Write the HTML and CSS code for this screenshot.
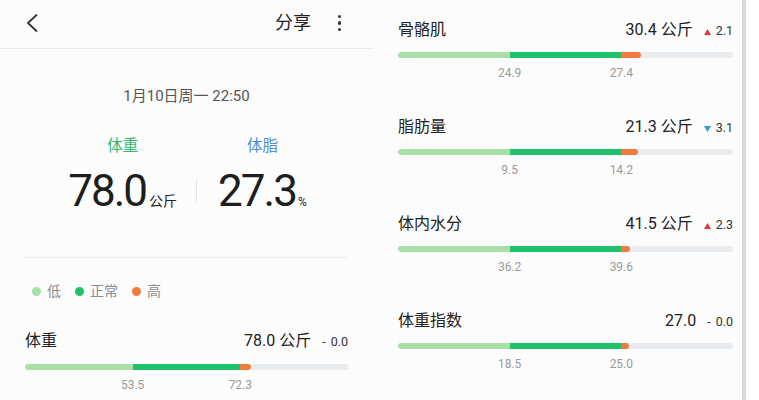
FILE: index.html
```html
<!DOCTYPE html>
<html lang="zh">
<head>
<meta charset="utf-8">
<link rel="stylesheet" href="styles.css">
</head>
<body>
<div class="page">
  <section class="left">
    <header class="topbar">
      <svg class="back" width="12" height="18" viewBox="0 0 12 18"><polyline points="10.5,1 2,9 10.5,17" fill="none" stroke="#333" stroke-width="1.8" stroke-linecap="round" stroke-linejoin="round"/></svg>
      <span class="share">分享</span>
      <span class="kebab"><i></i><i></i><i></i></span>
    </header>
    <div class="date">1月10日周一 22:50</div>
    <div class="summary">
      <div class="metric">
        <div class="mlabel green">体重</div>
        <div class="mvalue"><span class="big">78.0</span><span class="unit">公斤</span></div>
      </div>
      <div class="vdiv"></div>
      <div class="metric">
        <div class="mlabel blue">体脂</div>
        <div class="mvalue"><span class="big">27.3</span><span class="unit pct">%</span></div>
      </div>
    </div>
    <div class="hdiv"></div>
    <div class="legend">
      <span class="ldot low"></span><span class="ltext">低</span>
      <span class="ldot normal"></span><span class="ltext">正常</span>
      <span class="ldot high"></span><span class="ltext">高</span>
    </div>
    <div class="row">
      <div class="rhead">
        <span class="rname">体重</span>
        <span class="rval">78.0 公斤</span>
        <span class="delta"><span class="dash">-</span>0.0</span>
      </div>
      <div class="track"><span class="seg s-low"></span><span class="seg s-norm"></span><span class="seg s-high" style="width:3.2%"></span></div>
      <div class="ticks"><span class="t1">53.5</span><span class="t2">72.3</span></div>
    </div>
  </section>

  <section class="right">
    <div class="row">
      <div class="rhead">
        <span class="rname">骨骼肌</span>
        <span class="rval">30.4 公斤</span>
        <span class="delta"><svg class="tri" width="7" height="6" viewBox="0 0 7 6"><polygon points="3.5,0 7,6 0,6" fill="#e0393e"/></svg>2.1</span>
      </div>
      <div class="track"><span class="seg s-low"></span><span class="seg s-norm"></span><span class="seg s-high" style="width:6%"></span></div>
      <div class="ticks"><span class="t1">24.9</span><span class="t2">27.4</span></div>
    </div>
    <div class="row">
      <div class="rhead">
        <span class="rname">脂肪量</span>
        <span class="rval">21.3 公斤</span>
        <span class="delta"><svg class="tri" width="7" height="6" viewBox="0 0 7 6"><polygon points="0,0 7,0 3.5,6" fill="#2a9dd4"/></svg>3.1</span>
      </div>
      <div class="track"><span class="seg s-low"></span><span class="seg s-norm"></span><span class="seg s-high" style="width:5.1%"></span></div>
      <div class="ticks"><span class="t1">9.5</span><span class="t2">14.2</span></div>
    </div>
    <div class="row">
      <div class="rhead">
        <span class="rname">体内水分</span>
        <span class="rval">41.5 公斤</span>
        <span class="delta"><svg class="tri" width="7" height="6" viewBox="0 0 7 6"><polygon points="3.5,0 7,6 0,6" fill="#e0393e"/></svg>2.3</span>
      </div>
      <div class="track"><span class="seg s-low"></span><span class="seg s-norm"></span><span class="seg s-high" style="width:2.6%"></span></div>
      <div class="ticks"><span class="t1">36.2</span><span class="t2">39.6</span></div>
    </div>
    <div class="row">
      <div class="rhead">
        <span class="rname">体重指数</span>
        <span class="rval">27.0</span>
        <span class="delta"><span class="dash">-</span>0.0</span>
      </div>
      <div class="track"><span class="seg s-low"></span><span class="seg s-norm"></span><span class="seg s-high" style="width:2.3%"></span></div>
      <div class="ticks"><span class="t1">18.5</span><span class="t2">25.0</span></div>
    </div>
  </section>
  <div class="scroll"></div>
  <div class="edge"></div>
</div>
</body>
</html>
```

FILE: styles.css
```css
* { box-sizing: border-box; }
html, body { margin: 0; padding: 0; }
body {
  width: 759px;
  height: 400px;
  overflow: hidden;
  background: #fcfcfc;
  font-family: Roboto, "Noto Sans CJK SC", sans-serif;
  color: #222;
}
.page {
  display: flex;
  height: 400px;
}
.left {
  width: 373px;
  flex: none;
  display: flex;
  flex-direction: column;
}
.topbar {
  height: 49px;
  border-bottom: 1px solid #ececec;
  display: flex;
  align-items: center;
  padding: 0 31px 2px 26px;
}
.back { display: block; }
.share {
  margin-left: auto;
  font-size: 18px;
  line-height: 22px;
  color: #222;
}
.kebab {
  margin-left: 26px;
  width: 5px;
  display: flex;
  flex-direction: column;
  align-items: center;
  gap: 3px;
}
.kebab i {
  display: block;
  width: 3.5px;
  height: 3.5px;
  border-radius: 50%;
  background: #333;
}
.date {
  margin-top: 37px;
  text-align: center;
  font-size: 15px;
  line-height: 20px;
  color: #555;
}
.summary {
  margin-top: 30px;
  display: flex;
  justify-content: center;
  align-items: flex-start;
  padding-left: 2px;
}
.metric {
  display: flex;
  flex-direction: column;
  align-items: center;
}
.mlabel {
  font-size: 15.5px;
  line-height: 20px;
}
.green { color: #35b56c; }
.blue { color: #4d8fd6; }
.mvalue {
  margin-top: 13px;
  display: flex;
  align-items: baseline;
}
.big {
  font-size: 44px;
  line-height: 44px;
  color: #1e1e1e;
  letter-spacing: -2px;
}
.unit {
  font-size: 14px;
  margin-left: 3px;
  color: #222;
}
.pct { font-size: 12px; margin-left: 2px; }
.vdiv {
  width: 1px;
  height: 25px;
  background: #e6e6e6;
  margin: 42px 21px 0 19px;
}
.hdiv {
  margin: 44px 25px 0 25px;
  height: 1px;
  background: #ececec;
}
.legend {
  margin: 23px 0 0 32px;
  display: flex;
  align-items: center;
  height: 20px;
  font-size: 14px;
  color: #8c8c8c;
}
.ldot {
  width: 9px;
  height: 9px;
  border-radius: 50%;
  margin-right: 6px;
}
.ltext { margin-right: 14px; line-height: 20px; }
.ldot.low { background: #a8e0a6; }
.ldot.normal { background: #1fc26b; }
.ldot.high { background: #f07b3c; }

.left .row {
  margin: 29px 25px 0 25px;
}

.right {
  width: 369px;
  flex: none;
  padding: 18.5px 0 0 25px;
}
.right .row { margin-bottom: 34.5px; width: 335px; }

.rhead {
  display: flex;
  align-items: baseline;
  height: 22px;
  line-height: 22px;
}
.rname {
  font-size: 16px;
  color: #222;
}
.rval {
  margin-left: auto;
  font-size: 16px;
  color: #222;
}
.delta {
  margin-left: 11px;
  font-size: 12.5px;
  color: #333;
  display: inline-flex;
  align-items: baseline;
}
.tri { margin-right: 5px; display: inline-block; }
.dash { margin-right: 5px; }
.track {
  margin-top: 11.5px;
  height: 6px;
  border-radius: 3px;
  background: #e9ecef;
  display: flex;
  overflow: hidden;
}
.seg { display: block; height: 6px; }
.s-low { width: 33.33%; background: #a8e0a6; border-radius: 3px 0 0 3px; }
.s-norm { width: 33.33%; background: #1fc26b; }
.s-high { background: #f07b3c; border-radius: 0 3px 3px 0; }
.ticks {
  margin-top: 7px;
  display: grid;
  grid-template-columns: repeat(6, 1fr);
  font-size: 12px;
  line-height: 16px;
  color: #9a9a9a;
}
.t1 { grid-column: 2 / 4; text-align: center; }
.t2 { grid-column: 4 / 6; text-align: center; }

.scroll {
  width: 4px;
  background: #d8d8d8;
  height: 400px;
  flex: none;
}
.edge {
  flex: 1;
  background: #ffffff;
}
```
